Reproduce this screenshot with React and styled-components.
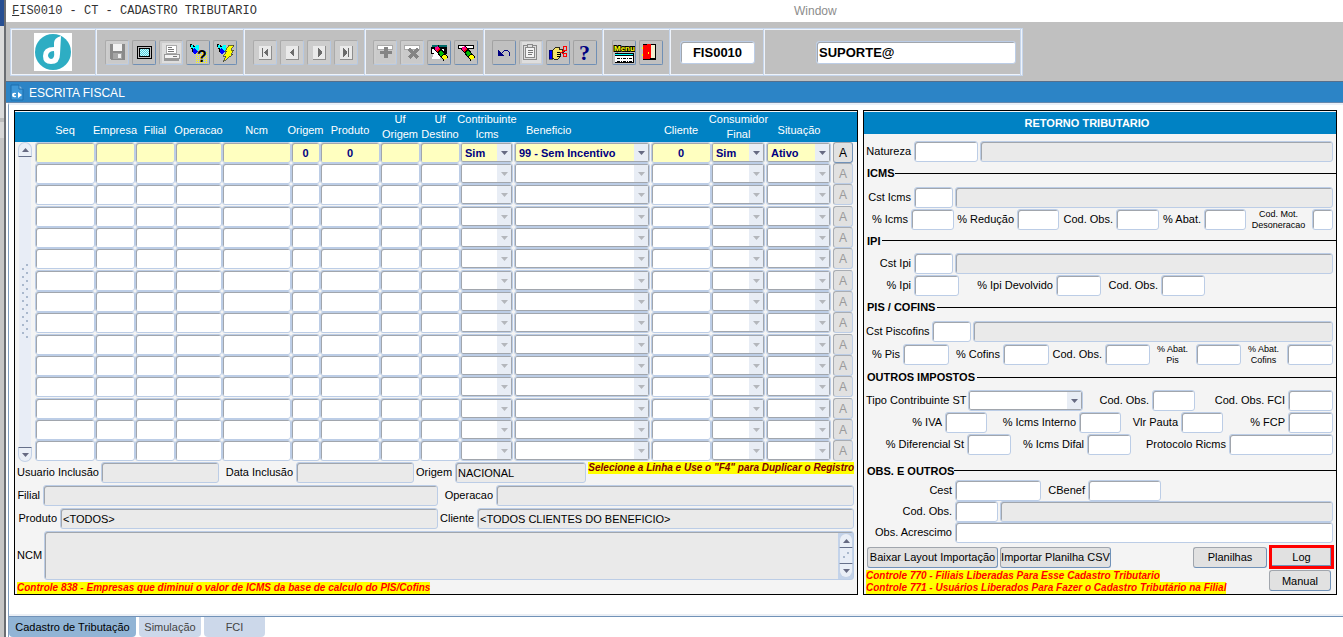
import React, { useId } from 'react';
import styled, { createGlobalStyle, css } from 'styled-components';

const GlobalStyle = createGlobalStyle`
  *, *::before, *::after {
    box-sizing: border-box;
  }
  body {
    margin: 0;
    background: #fff;
    overflow: hidden;
  }
  body, input, select, textarea, button {
    font-family: "Liberation Sans", Arial, sans-serif;
    font-size: 11px;
    color: #000;
  }
`;

const Shell = styled.div`
  display: grid;
  grid-template-columns: 6px 1fr;
  min-height: 100vh;
`;

const Edge = styled.div`
  border-right: 2px solid #6a6d72;
  background: linear-gradient(#274f93 0 26px, #dcdcdc 26px 118px, #bdbdbd 118px 122px, #d8d8d8 122px 138px, #c6c6c6 138px);
`;

const Main = styled.main`
  display: flex;
  flex-direction: column;
  min-width: 0;
`;

const TitleBar = styled.header`
  display: flex;
  align-items: center;
  height: 22px;
  padding: 0 6px;
  font-family: "Liberation Mono", "Courier New", monospace;
  font-size: 12px;
  color: #333;
`;

const AppName = styled.div`
  flex: 0 0 782px;

  &::first-letter {
    text-decoration: underline;
  }
`;

const WindowMenu = styled.span`
  font-family: "Liberation Sans", Arial, sans-serif;
  color: #8c8c8c;
`;

const Toolbar = styled.div`
  display: flex;
  padding: 6px 4px 5px;
  background: #c0c0c0;
`;

const ToolFrame = styled.div`
  display: flex;
  height: 48px;
  border: 1px solid #c6d6ec;
  box-shadow: inset 1px 1px 0 #eef3fa, inset 0 -1px 0 #eef3fa;
`;

const ToolGroup = styled.div`
  display: flex;
  align-items: center;
  gap: 3px;
  padding: ${p => p.$pad || '0 7px 0 8px'};
  border-right: 1px solid #eef3fa;
  box-shadow: inset -1px 0 0 #c6d6ec;
`;

const ToolButton = styled.button`
  width: 24px;
  height: 25px;
  padding: 0;
  border: 1px solid;
  border-color: #a2a2a2 #6f8fb5 #6f8fb5 #a2a2a2;
  border-radius: 2px;
  background: #c0c0c0;

  &:disabled {
    border-color: #ababab #b7c9e2 #b7c9e2 #ababab;
    background: #cdcdcd;
  }
  svg {
    display: block;
  }
`;

const fieldBox = css`
  width: 100%;
  min-width: 0;
  height: 21px;
  margin: 0;
  padding: 0 2px;
  border: 1px solid #bccde6;
  border-radius: 3px;
  box-shadow: inset 1px 1px 0 #a1a6ad;
  outline: none;
`;

const Input = styled.input`
  ${fieldBox}
  background: #fff;

  &:read-only {
    background: #eaeaea;
  }
`;

const ToolInput = styled(Input)`
  width: ${p => p.$width};
  height: 23px;
  font-size: 13px;
  font-weight: bold;
  text-align: ${p => p.$align || 'left'};
`;

const DocTitle = styled.div`
  display: flex;
  align-items: center;
  gap: 5px;
  height: 22px;
  padding: 1px 0 0 4px;
  border-top: 1px solid #566f8c;
  border-bottom: 1px solid #6688ac;
  background: #2c84c6;
  color: #fff;
  font-size: 12px;
`;

const DocBody = styled.div`
  display: flex;
  flex-direction: column;
  margin-left: 2px;
  border-left: 1px solid #7f9bbb;
  border-top: 2px solid #eaf0f8;
`;

const Panels = styled.div`
  display: grid;
  grid-template-columns: 844fr 474fr;
  gap: 5px;
  padding: 5px 6px 19px 5px;
`;

const Panel = styled.section`
  display: flex;
  flex-direction: column;
  min-width: 0;
  height: 485px;
  padding-top: 1px;
  border: 1px solid #000;
  background: #f4f4f4;
`;

const RecordTable = styled.table`
  width: 100%;
  table-layout: fixed;
  border-collapse: collapse;

  thead tr {
    height: 30px;
    background: #0082c4;
  }
  tbody tr {
    height: 21px;
  }
  tbody tr:nth-child(3n) {
    height: 22px;
  }
  th, td {
    padding: 0;
    vertical-align: top;
  }
`;

const HeadLabel = styled.div`
  display: flex;
  flex-direction: column;
  justify-content: flex-end;
  align-items: ${p => (p.$left ? 'flex-start' : 'center')};
  height: 30px;
  padding: ${p => (p.$left ? '0 0 4px 12px' : p.$two ? '0' : '0 0 4px')};
  font-weight: normal;
  line-height: 15px;
  white-space: nowrap;
  color: #fff;
`;

const CellInput = styled(Input)`
  display: block;
  font-weight: bold;
  text-align: center;
  color: #000080;
  background: ${p => (p.$current ? '#ffffc0' : '#fff')};
`;

const SelectBox = styled.div`
  display: grid;
  grid-template-columns: 1fr 16px;
  padding-right: ${p => (p.$cell ? '1px' : '0')};
`;

const Select = styled.select`
  ${fieldBox}
  grid-area: 1 / 1 / 2 / 3;
  appearance: none;
  padding-left: 4px;
  box-shadow: inset 0 0 0 1px #a1a6ad;
  font-weight: bold;
  color: #000080;
  opacity: 1;
  background: ${p => (p.$current ? '#ffffc0' : '#fff')};
`;

const SelectArrow = styled.span`
  grid-area: 1 / 2 / 2 / 3;
  display: flex;
  align-items: center;
  justify-content: center;
  margin: 2px 2px 2px 0;
  background: #e8edf5;
  color: ${p => (p.$muted ? '#b4b7bc' : '#666a82')};
  pointer-events: none;
`;

const PushButton = styled.button`
  width: ${p => p.$width || 'auto'};
  height: 21px;
  padding: 0;
  border: 1px solid;
  border-color: #a1a6ad #7192b8 #7192b8 #a1a6ad;
  border-radius: 3px;
  background: #e1e1e1;
  white-space: nowrap;
`;

const CellButton = styled(PushButton)`
  display: block;
  width: 20px;
  margin-left: 1px;
  font-size: 12px;

  &:disabled {
    border-color: #a9adb3 #bccde6 #bccde6 #a9adb3;
    color: #9a9a9a;
  }
`;

const HighlightButton = styled(PushButton)`
  width: 65px;
  height: 24px;
  border: 3px solid #f00;
  border-radius: 0;
  box-shadow: inset -1px -1px 0 #7192b8;
`;

const Scroll = styled.div`
  display: flex;
  flex-direction: column;
  width: 14px;
  height: ${p => p.$height};
  margin: ${p => p.$margin || '0'};
`;

const ScrollButton = styled.button`
  display: flex;
  align-items: center;
  justify-content: center;
  flex: 0 0 15px;
  padding: 0;
  border: 1px solid #c3d1e6;
  border-radius: ${p => (p.$down ? '0 0 7px 7px' : '7px 7px 0 0')};
  border-bottom-color: ${p => (p.$down ? '#c3d1e6' : '#66708a')};
  border-top-color: ${p => (p.$down ? '#66708a' : '#c3d1e6')};
  background: #eaeff7;
  color: #666a82;
`;

const ScrollTrack = styled.div`
  display: flex;
  align-items: center;
  justify-content: center;
  flex: 1;
  margin: 0 1px;
  background: #e8edf6;
  overflow: hidden;
`;

const Grip = styled.div`
  width: 8px;
  height: ${p => p.$height};
  background:
    radial-gradient(circle at 1px 1px, #a9b8cd 1px, transparent 1px) 1px 4px / 8px 8px,
    radial-gradient(circle at 1px 1px, #a9b8cd 1px, transparent 1px) 5px 0 / 8px 8px;
`;

const Row = styled.div`
  display: grid;
  grid-template-columns: ${p => p.$cols};
  column-gap: 2px;
  align-items: center;
`;

const FormArea = styled.div`
  display: flex;
  flex-direction: column;
  gap: ${p => p.$gap || '0'};
  padding: 0 3px 0 2px;
`;

const Label = styled.label`
  text-align: ${p => (p.$small ? 'center' : 'right')};
  padding-right: 1px;
  font-size: ${p => (p.$small ? '9px' : '11px')};
  line-height: ${p => (p.$small ? '11px' : '15px')};
  white-space: pre;
`;

const NoteText = styled.p`
  align-self: ${p => p.$align || 'auto'};
  width: max-content;
  margin: 0;
  background: #ff0;
  color: ${p => (p.$dark ? '#800000' : '#f00')};
  font-size: 10px;
  font-style: italic;
  font-weight: bold;
  line-height: 12px;
  white-space: nowrap;
`;

const MemoBox = styled.div`
  display: flex;
  height: 49px;
  padding: 1px 0 1px 1px;
  border: 1px solid #bccde6;
  border-radius: 3px;
  box-shadow: inset 1px 1px 0 #a1a6ad;
  background: linear-gradient(to left, #c3d3ea 15px, #eaeaea 15px);
`;

const Memo = styled.textarea`
  flex: 1;
  border: none;
  outline: none;
  resize: none;
  overflow: hidden;
  background: transparent;
`;

const PanelTitle = styled.h2`
  margin: 0 0 7px;
  padding-right: 26px;
  background: #0082c4;
  color: #fff;
  font-size: 11px;
  line-height: 22px;
  text-align: center;
`;

const SectionTitle = styled.h3`
  display: flex;
  align-items: center;
  gap: ${p => p.$gap || '2px'};
  height: ${p => p.$height || '23px'};
  margin: 0 0 2px;
  padding: ${p => p.$top || '0'} 0 0 3px;
  font-size: 11px;

  &::after {
    content: '';
    flex: 1;
    height: 1px;
    background: #000;
  }
`;

const Actions = styled.div`
  display: grid;
  grid-template-columns: 131px 111px 1fr 74px 65px;
  column-gap: 2px;
  align-items: center;
  padding: 2px 2px 0 3px;
`;

const FootRow = styled.div`
  display: flex;
  justify-content: space-between;
  padding: 1px 5px 0 2px;
`;

const Tabs = styled.nav`
  display: flex;
  gap: 3px;
  height: 23px;
  border-top: 2px solid #ebeff5;
  box-shadow: inset 0 1px 0 #7192b8;
`;

const Tab = styled.button`
  width: ${p => p.$width};
  height: 20px;
  margin-top: 1px;
  padding: 0;
  border: none;
  border-radius: 0 0 4px 4px;
  background: ${p => (p.$active ? '#91b4d5' : '#ccd8ea')};
  color: ${p => (p.$active ? '#000' : '#444')};
`;

const Triangle = ({ up }) => (
  <svg width="7" height="4" viewBox="0 0 7 4" aria-hidden="true">
    <path d={up ? 'M0 4L3.5 0L7 4Z' : 'M0 0H7L3.5 4Z'} fill="currentColor" />
  </svg>
);

const Icon = ({ children }) => (
  <svg width="22" height="23" viewBox="1 1 22 23" aria-hidden="true" shapeRendering="crispEdges">
    {children}
  </svg>
);

const Flashlight = () => (
  <g>
    <path d="M4 4h2v1h2v1h3l-4 6H6V9H5V7H4z" fill="#000" />
    <path d="M5 5h2v2h2v2H7V8H5z" fill="#0ff" />
    <path d="M10 5h3v5l-2 1-3-3z" fill="#0ff" />
    <path d="M8 8l4 3-3 3-2-1V9z" fill="#00f" />
  </g>
);

const Pen = () => (
  <g>
    <path d="M9 7L19 19" stroke="#000" strokeWidth="6" />
    <path d="M9 7L12 10.600" stroke="#f08" strokeWidth="4" />
    <path d="M11 9.400L12 10.600" stroke="#f00" strokeWidth="4" />
    <path d="M13 11.800L15.500 14.800" stroke="#0b0" strokeWidth="4" />
    <path d="M16.200 15.600L19 19" stroke="#ff0" strokeWidth="4" />
  </g>
);

const NavFace = ({ d }) => (
  <Icon>
    <rect x="6" y="6" width="13" height="14" fill="#8e8e8e" />
    <rect x="6" y="6" width="12" height="13" fill="#eaeaea" />
    <path d={d} fill="#6c6c6c" />
  </Icon>
);

const icons = {
  save: (
    <Icon>
      <rect x="3" y="3" width="19" height="20" fill="#cacaca" />
      <path d="M5 4h14l1 1v15H6l-1-1z" fill="#8a8a8a" />
      <rect x="8" y="4" width="9" height="7" fill="#f2f2f2" />
      <rect x="8" y="13" width="9" height="6" fill="#a6a6a6" />
      <rect x="13" y="14" width="3" height="4" fill="#eee" />
    </Icon>
  ),
  window: (
    <Icon>
      <rect x="5.500" y="6.500" width="14" height="12" rx="1" fill="#c0c0c0" stroke="#000" strokeWidth="1.500" />
      <rect x="7.500" y="8.500" width="10" height="8" fill="#cff" stroke="#000" strokeWidth="1" />
      <path d="M8 9.500h9M8 11.500h9M8 13.500h9M8 15.500h9" stroke="#5cd" strokeDasharray="1 1" />
      <path d="M9 10.500h8M9 12.500h8M9 14.500h8" stroke="#5cd" strokeDasharray="1 1" />
    </Icon>
  ),
  print: (
    <Icon>
      <rect x="3" y="3" width="19" height="20" fill="#dedede" />
      <path d="M8 5h9v8H7V8z" fill="#fff" stroke="#aaa" />
      <path d="M9 7.500h4M9 9.500h6M9 11.500h6" stroke="#777" />
      <path d="M5 14h15v4H5z" fill="#f4f4f4" stroke="#999" />
      <path d="M5 19h15v2H5z" fill="#999" />
      <path d="M14 16.500h4" stroke="#777" />
    </Icon>
  ),
  query: (
    <Icon>
      <path d="M16 12.500h6M10 14.500h12M10 16.500h12M10 18.500h12M10 20.500h12M10 22.500h12" stroke="#ff0" strokeDasharray="1 1" />
      <Flashlight />
      <text x="11" y="22" fontSize="16" fontWeight="bold" fill="#000">?</text>
    </Icon>
  ),
  execute: (
    <Icon>
      <Flashlight />
      <path d="M16 5h5l-3 5h3l-3 4h2L10 22l3-6h-3l4-5h-2z" fill="#ff0" stroke="#333" strokeWidth="0.700" />
    </Icon>
  ),
  first: <NavFace d="M9 8h1v9H9zM15 8v9l-4-4v-1z" />,
  prev: <NavFace d="M14 8v9l-4-4v-1z" />,
  next: <NavFace d="M11 8v9l4-4v-1z" />,
  last: <NavFace d="M14 8h1v9h-1zM9 8v9l4-4v-1z" />,
  insert: (
    <Icon>
      <rect x="3" y="3" width="19" height="20" fill="#cacaca" />
      <path d="M4.500 5.500h15v4h-15z" fill="#fff" stroke="#aaa" />
      <path d="M11 7h4v4h4v3h-4v4h-4v-4H7v-3h4z" fill="#848484" />
    </Icon>
  ),
  remove: (
    <Icon>
      <rect x="3" y="3" width="19" height="20" fill="#cacaca" />
      <path d="M4.500 5.500h15v4h-15z" fill="#fff" stroke="#aaa" />
      <path d="M9 9L18 18M18 9L9 18" stroke="#848484" strokeWidth="3" />
    </Icon>
  ),
  editRecord: (
    <Icon>
      <path d="M5 5h15v2H5z" fill="#006a6a" />
      <path d="M4 7h16v7H4z" fill="#000" />
      <path d="M5 9h12v4H5z" fill="#fff" />
      <path d="M7 13h6v6H5z" fill="#fff" />
      <Pen />
    </Icon>
  ),
  clear: (
    <Icon>
      <path d="M4.500 5.500h15v3h-15z" fill="#fff" stroke="#000" />
      <Pen />
    </Icon>
  ),
  undo: (
    <Icon>
      <path d="M6 10v6h6z" fill="#000080" />
      <path d="M8.500 14.500L11.500 11.500Q14 9.500 16.500 11.500T16.500 16.500" fill="none" stroke="#000080" />
    </Icon>
  ),
  clipboard: (
    <Icon>
      <rect x="3" y="2" width="19" height="21" fill="#dedede" />
      <rect x="4.500" y="5.500" width="13" height="14" fill="none" stroke="#8a8a8a" />
      <rect x="6.500" y="7.500" width="9" height="10" fill="#f4f4f4" stroke="#8a8a8a" />
      <rect x="8.500" y="4.500" width="5" height="3" fill="#ddd" stroke="#8a8a8a" />
      <path d="M9 10.500h5M9 12.500h5M9 14.500h4" stroke="#777" />
    </Icon>
  ),
  cut: (
    <Icon>
      <rect x="3" y="10" width="3" height="9" fill="#00f" stroke="#000" strokeWidth="0.500" />
      <path d="M6 11l4-4h3v2h3v1h2v2h-4v5l-2 2H8l-2-1z" fill="#f5e36a" stroke="#000" strokeWidth="0.800" />
      <path d="M11 12.500h4M11 14.500h4M11 16.500h3" stroke="#000" />
      <path d="M14 13l4-2M14 12l4 2" stroke="#f00" />
      <rect x="17.500" y="6.500" width="3" height="4" rx="1" fill="none" stroke="#f00" />
      <rect x="17.500" y="13.500" width="3" height="3" rx="1" fill="none" stroke="#f00" />
    </Icon>
  ),
  help: (
    <Icon>
      <text x="6" y="20" fontFamily="Liberation Serif, serif" fontSize="22" fontWeight="bold" fill="#000080">?</text>
    </Icon>
  ),
  menu: (
    <Icon>
      <text x="2" y="11" fontSize="8" fontWeight="bold" fill="#ff0" stroke="#000" strokeWidth="2" paintOrder="stroke">Menu</text>
      <rect x="3" y="13" width="19" height="10" fill="#000" />
      <rect x="3" y="14" width="18" height="1" fill="#0ff" />
      <rect x="3" y="16" width="18" height="6" fill="#fff" />
      <path d="M5 18.500h15M5 21.500h15" stroke="#000" strokeDasharray="3 1 1 1" />
    </Icon>
  ),
  exit: (
    <Icon>
      <path d="M4 4h13v16H4z" fill="#000" />
      <path d="M11 5h5v13h-5z" fill="#f4f0d0" />
      <path d="M4 5l8-1v13l-2 2H4z" fill="#f00" />
      <rect x="9" y="12" width="1" height="2" fill="#ff0" />
      <rect x="3" y="7" width="1" height="2" fill="#ff0" />
      <rect x="3" y="14" width="1" height="2" fill="#ff0" />
    </Icon>
  ),
};

const toolGroups = [
  {
    tools: [
      ['save', 'Salvar', true],
      ['window', 'Janela'],
      ['print', 'Imprimir', true],
      ['query', 'Consultar'],
      ['execute', 'Executar consulta'],
    ],
  },
  {
    tools: [
      ['first', 'Primeiro', true],
      ['prev', 'Anterior', true],
      ['next', 'Proximo', true],
      ['last', 'Ultimo', true],
    ],
  },
  {
    pad: '0 6px 0 7px',
    tools: [
      ['insert', 'Inserir', true],
      ['remove', 'Remover', true],
      ['editRecord', 'Limpar bloco'],
      ['clear', 'Limpar registro'],
    ],
  },
  {
    pad: '0 6px 0 7px',
    tools: [
      ['undo', 'Desfazer'],
      ['clipboard', 'Colar', true],
      ['cut', 'Recortar'],
      ['help', 'Ajuda'],
    ],
  },
  {
    tools: [
      ['menu', 'Menu'],
      ['exit', 'Sair'],
    ],
  },
];

const columns = [
  { label: 'Seq', width: 60 },
  { label: 'Empresa', width: 40 },
  { label: 'Filial', width: 40 },
  { label: 'Operacao', width: 47 },
  { label: 'Ncm', width: 69 },
  { label: 'Origem', width: 29, value: '0' },
  { label: 'Produto', width: 60, value: '0' },
  { label: 'Uf\nOrigem', width: 40 },
  { label: 'Uf\nDestino', width: 40 },
  { label: 'Contribuinte\nIcms', width: 54, list: true, value: 'Sim' },
  { label: 'Beneficio', width: 137, list: true, left: true, value: '99 - Sem Incentivo' },
  { label: 'Cliente', width: 60, value: '0' },
  { label: 'Consumidor\nFinal', width: 55, list: true, value: 'Sim' },
  { label: 'Situação', width: 66, list: true, value: 'Ativo' },
];

const rows = Array.from({ length: 15 }, (_, i) => i);

function Logo() {
  return (
    <svg width="38" height="38" viewBox="0 0 38 38" aria-hidden="true">
      <rect width="38" height="38" fill="#fff" />
      <circle cx="19" cy="19" r="18" fill="#2eadc3" />
      <path d="M27 3Q20 5 20 10V14Q9 14 9 23Q9 31 17 31Q26 31 26 21Z" fill="#fff" />
      <path d="M20 18Q21 26 17 26Q14 25 14 22Q15 18 20 18Z" fill="#2eadc3" />
    </svg>
  );
}

function DocIcon() {
  return (
    <svg width="14" height="17" viewBox="0 0 14 17" aria-hidden="true">
      <path d="M1 1h8l4 4v11H1z" fill="#3d97d8" stroke="#1d6fae" />
      <path d="M9 1v4h4" fill="#7cb8e6" stroke="#1d6fae" />
      <path d="M6 9Q2 8 2 11T6 13V12Q4 12 4 11T6 10zM8 8l4 3-4 3z" fill="#fff" />
    </svg>
  );
}

function Field({ label, small, readOnly, value = '' }) {
  const id = useId();
  return (
    <>
      <Label htmlFor={id} $small={small}>{label}</Label>
      <Input id={id} type="text" defaultValue={value} readOnly={readOnly} />
    </>
  );
}

function LookupField({ label, cols }) {
  return (
    <Row $cols={cols}>
      <Field label={label} />
      <Input type="text" aria-label={`${label} descricao`} readOnly />
    </Row>
  );
}

function ListField({ label, value, current, disabled, cell, id }) {
  return (
    <SelectBox $cell={cell}>
      <Select id={id} aria-label={label} defaultValue={value} disabled={disabled} $current={current}>
        <option value={value}>{value}</option>
      </Select>
      <SelectArrow $muted={disabled}><Triangle /></SelectArrow>
    </SelectBox>
  );
}

function ScrollBar({ height, margin, grip }) {
  return (
    <Scroll $height={height} $margin={margin}>
      <ScrollButton type="button" aria-label="Subir"><Triangle up /></ScrollButton>
      <ScrollTrack><Grip $height={grip} /></ScrollTrack>
      <ScrollButton type="button" aria-label="Descer" $down><Triangle /></ScrollButton>
    </Scroll>
  );
}

function Records() {
  return (
    <RecordTable>
      <colgroup>
        <col style={{ width: 20 }} />
        {columns.map(c => <col key={c.label} style={{ width: c.width }} />)}
        <col style={{ width: 25 }} />
      </colgroup>
      <thead>
        <tr>
          <th />
          {columns.map(c => {
            const lines = c.label.split('\n');
            return (
              <th key={c.label} scope="col">
                <HeadLabel $left={c.left} $two={lines.length > 1}>
                  {lines.map(l => <span key={l}>{l}</span>)}
                </HeadLabel>
              </th>
            );
          })}
          <th />
        </tr>
      </thead>
      <tbody>
        {rows.map(i => {
          const current = i === 0;
          return (
            <tr key={i}>
              {current && (
                <td rowSpan={rows.length}>
                  <ScrollBar height="320px" margin="0 0 0 3px" grip="76px" />
                </td>
              )}
              {columns.map(c => (
                <td key={c.label}>
                  {c.list ? (
                    <ListField cell label={c.label} value={current ? c.value : ''} current={current} disabled={!current} />
                  ) : (
                    <CellInput type="text" aria-label={c.label} defaultValue={current ? c.value : ''} $current={current} />
                  )}
                </td>
              ))}
              <td><CellButton type="button" disabled={!current}>A</CellButton></td>
            </tr>
          );
        })}
      </tbody>
    </RecordTable>
  );
}

function RecordsPanel() {
  const memoId = useId();
  return (
    <Panel>
      <Records />
      <FormArea $gap="2px">
        <Row $cols="82px 118px 73px 118px 37px 1fr auto">
          <Field label="Usuario Inclusão" readOnly />
          <Field label="Data Inclusão" readOnly />
          <Field label="Origem" value="NACIONAL" readOnly />
          <NoteText $dark $align="start">Selecione a Linha e Use o "F4" para Duplicar o Registro</NoteText>
        </Row>
        <Row $cols="24px 395fr 54px 358fr">
          <Field label="Filial" readOnly />
          <Field label="Operacao" readOnly />
        </Row>
        <Row $cols="41px 378fr 35px 377fr">
          <Field label="Produto" value="<TODOS>" readOnly />
          <Field label="Cliente" value="<TODOS CLIENTES DO BENEFICIO>" readOnly />
        </Row>
        <Row $cols="25px 1fr">
          <Label htmlFor={memoId}>NCM</Label>
          <MemoBox>
            <Memo id={memoId} readOnly />
            <ScrollBar height="45px" grip="8px" />
          </MemoBox>
        </Row>
        <NoteText>Controle 838 - Empresas que diminui o valor de ICMS da base de calculo do PIS/Cofins</NoteText>
      </FormArea>
    </Panel>
  );
}

function ReturnPanel() {
  const stId = useId();
  return (
    <Panel>
      <PanelTitle>RETORNO TRIBUTARIO</PanelTitle>
      <FormArea>
        <LookupField label="Natureza" cols="46px 64px 1fr" />
      </FormArea>

      <SectionTitle $gap="0">ICMS</SectionTitle>
      <FormArea $gap="1px">
        <LookupField label="Cst Icms" cols="46px 39px 1fr" />
        <Row $cols="43px 43px 59px 42px 53px 43px 41px 42px 1fr 21px">
          <Field label="% Icms" />
          <Field label="% Redução" />
          <Field label="Cod. Obs." />
          <Field label="% Abat." />
          <Field label={'Cod. Mot.\nDesoneracao'} small />
        </Row>
      </FormArea>

      <SectionTitle $height="21px">IPI</SectionTitle>
      <FormArea $gap="1px">
        <LookupField label="Cst Ipi" cols="46px 39px 1fr" />
        <Row $cols="46px 45px 93px 45px 56px 44px 1fr">
          <Field label="% Ipi" />
          <Field label="% Ipi Devolvido" />
          <Field label="Cod. Obs." />
        </Row>
      </FormArea>

      <SectionTitle>PIS / COFINS</SectionTitle>
      <FormArea $gap="2px">
        <LookupField label="Cst Piscofins" cols="64px 39px 1fr" />
        <Row $cols="35px 46px 50px 46px 52px 45px 42px 45px 1fr 46px">
          <Field label="% Pis" />
          <Field label="% Cofins" />
          <Field label="Cod. Obs." />
          <Field label={'% Abat.\nPis'} small />
          <Field label={'% Abat.\nCofins'} small />
        </Row>
      </FormArea>

      <SectionTitle>OUTROS IMPOSTOS</SectionTitle>
      <FormArea $gap="1px">
        <Row $cols="100px 115px 65px 43px 1fr 45px">
          <Label htmlFor={stId}>Tipo Contribuinte ST</Label>
          <ListField id={stId} value="" />
          <Field label="Cod. Obs." />
          <Field label="Cod. Obs. FCI" />
        </Row>
        <Row $cols="77px 42px 88px 42px 56px 42px 1fr 45px">
          <Field label="% IVA" />
          <Field label="% Icms Interno" />
          <Field label="Vlr Pauta" />
          <Field label="% FCP" />
        </Row>
        <Row $cols="99px 44px 72px 44px 94px 1fr">
          <Field label="% Diferencial St" />
          <Field label="% Icms Difal" />
          <Field label="Protocolo Ricms" />
        </Row>
      </FormArea>

      <SectionTitle $gap="0" $top="8px">OBS. E OUTROS</SectionTitle>
      <FormArea>
        <Row $cols="87px 86px 43px 73px 1fr">
          <Field label="Cest" />
          <Field label="CBenef" />
        </Row>
        <LookupField label="Cod. Obs." cols="87px 43px 1fr" />
        <Row $cols="87px 1fr">
          <Field label="Obs. Acrescimo" />
        </Row>
      </FormArea>

      <Actions>
        <PushButton type="button">Baixar Layout Importação</PushButton>
        <PushButton type="button">Importar Planilha CSV</PushButton>
        <span />
        <PushButton type="button">Planilhas</PushButton>
        <HighlightButton type="button">Log</HighlightButton>
      </Actions>
      <FootRow>
        <div>
          <NoteText>Controle 770 - Filiais Liberadas Para Esse Cadastro Tributario</NoteText>
          <NoteText>Controle 771 - Usuários Liberados Para Fazer o Cadastro Tributário na Filial</NoteText>
        </div>
        <PushButton type="button" $width="62px">Manual</PushButton>
      </FootRow>
    </Panel>
  );
}

export default function App() {
  return (
    <Shell>
      <GlobalStyle />
      <Edge />
      <Main>
        <TitleBar>
          <AppName>FIS0010 - CT - CADASTRO TRIBUTARIO</AppName>
          <WindowMenu>Window</WindowMenu>
        </TitleBar>
        <Toolbar>
          <ToolFrame>
            <ToolGroup $pad="0 24px 0 23px"><Logo /></ToolGroup>
            {toolGroups.map((group, i) => (
              <ToolGroup key={i} $pad={group.pad}>
                {group.tools.map(([name, title, disabled]) => (
                  <ToolButton key={name} type="button" title={title} disabled={disabled}>
                    {icons[name]}
                  </ToolButton>
                ))}
              </ToolGroup>
            ))}
            <ToolGroup $pad="0 9px">
              <ToolInput aria-label="Programa" defaultValue="FIS0010" $width="75px" $align="center" />
            </ToolGroup>
            <ToolGroup $pad="0 5px 0 51px">
              <ToolInput aria-label="Usuario" defaultValue="SUPORTE@" $width="200px" />
            </ToolGroup>
          </ToolFrame>
        </Toolbar>
        <DocTitle><DocIcon />ESCRITA FISCAL</DocTitle>
        <DocBody>
          <Panels>
            <RecordsPanel />
            <ReturnPanel />
          </Panels>
          <Tabs>
            <Tab type="button" $active $width="127px">Cadastro de Tributação</Tab>
            <Tab type="button" $width="62px">Simulação</Tab>
            <Tab type="button" $width="61px">FCI</Tab>
          </Tabs>
        </DocBody>
      </Main>
    </Shell>
  );
}
